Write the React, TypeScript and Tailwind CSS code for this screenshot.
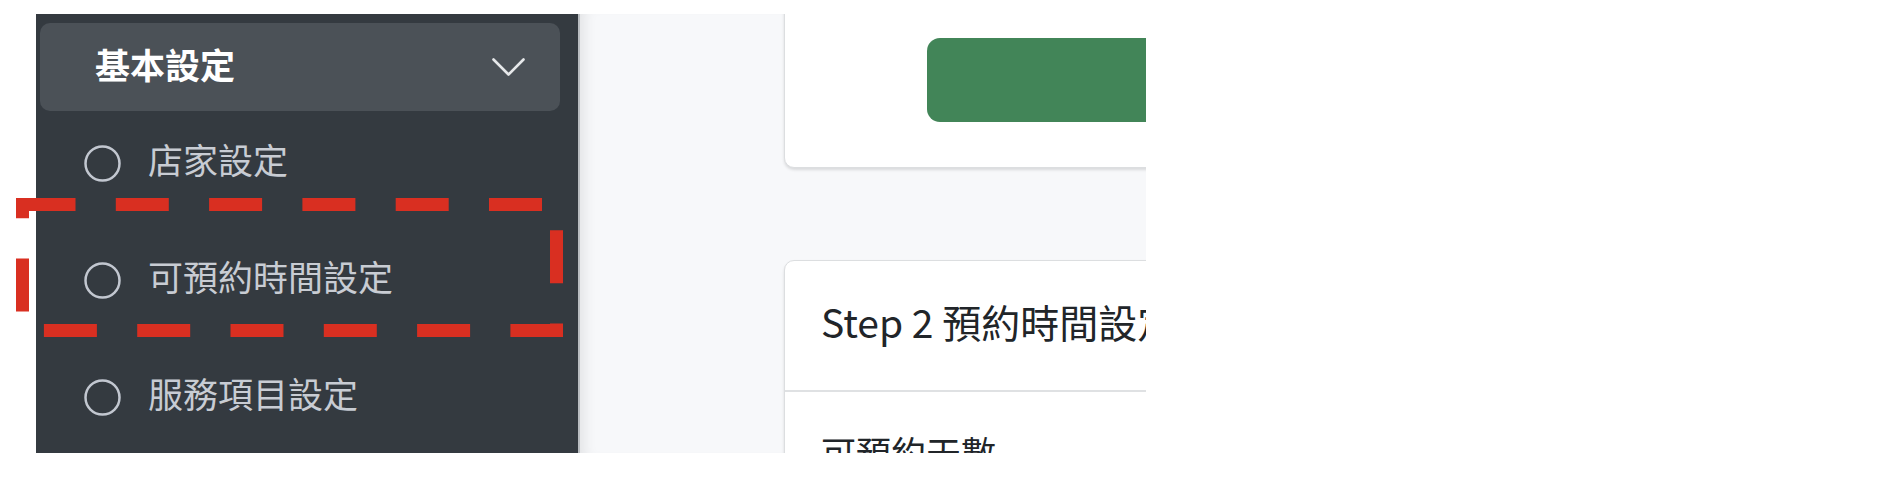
const menuItems = ["店家設定", "可預約時間設定", "服務項目設定"];

function CircleIcon() {
  return (
    <svg width="37" height="37" viewBox="0 0 37 37" className="shrink-0">
      <circle cx="18.5" cy="18.5" r="17" fill="none" stroke="#c2c7d0" strokeWidth="2.5" />
    </svg>
  );
}

function Chevron() {
  return (
    <svg width="33" height="19" viewBox="0 0 33 19" className="shrink-0">
      <polyline
        points="1.5,1.5 16.5,16.5 31.5,1.5"
        fill="none"
        stroke="#e6e8ea"
        strokeWidth="2.6"
        strokeLinecap="round"
        strokeLinejoin="round"
      />
    </svg>
  );
}

function Sidebar() {
  return (
    <aside className="w-[542px] shrink-0 h-full bg-[#343a40] flex flex-col">
      <div className="pt-[9px] pl-[4px]">
        <div className="w-[520px] h-[88px] rounded-[10px] bg-[#4b5157] flex items-center justify-between pl-[55px] pr-[35px]">
          <span className="text-[35px] leading-none font-bold text-white pb-[8px]">基本設定</span>
          <Chevron />
        </div>
      </div>
      <ul className="-mt-[6px]">
        {menuItems.map((label) => (
          <li key={label} className="h-[117px] flex items-center pl-[48px] gap-[27px]">
            <CircleIcon />
            <span className="text-[35px] leading-none text-[#c8ccd3] pb-[10px]">{label}</span>
          </li>
        ))}
      </ul>
    </aside>
  );
}

function Main() {
  return (
    <main className="flex-1 h-full bg-[#f7f8fa] border-l-2 border-[#b9bdc1] pl-[204px] shadow-[inset_14px_0_14px_-10px_rgba(0,0,0,0.09)] overflow-hidden">
      <div className="w-[900px] -mt-[30px] h-[184px] bg-white rounded-[10px] border border-[#dcdee0] shadow-[0_2px_3px_rgba(0,0,0,0.12)] pt-[53px] pl-[142px]">
        <div className="w-[600px] h-[84px] rounded-[13px] bg-[#428558]" />
      </div>
      <div className="w-[900px] mt-[92px] bg-white rounded-[10px] border border-[#dcdee0] shadow-[0_2px_3px_rgba(0,0,0,0.12)]">
        <div className="h-[131px] flex items-center pl-[36px] border-b-2 border-[#dfe1e3]">
          <span className="text-[39px] leading-none text-[#212529] pb-[8px] whitespace-nowrap">Step 2 預約時間設定</span>
        </div>
        <div className="pt-[42px] pl-[36px] h-[200px]">
          <span className="text-[35px] leading-none text-[#212529]">可預約天數</span>
        </div>
      </div>
    </main>
  );
}

export default function App() {
  return (
    <div className="relative w-[1886px] h-[478px] bg-white pl-[36px] pt-[14px] font-['Noto_Sans_CJK_TC',sans-serif]">
      <div className="w-[1110px] h-[439px] flex overflow-hidden">
        <Sidebar />
        <Main />
      </div>
      <svg className="absolute left-0 top-0 pointer-events-none" width="600" height="360">
        <rect
          x="22.5"
          y="204.5"
          width="534"
          height="126"
          fill="none"
          stroke="#d92f21"
          strokeWidth="13"
          strokeDasharray="53 40.3"
          strokeLinejoin="miter"
        />
      </svg>
    </div>
  );
}
